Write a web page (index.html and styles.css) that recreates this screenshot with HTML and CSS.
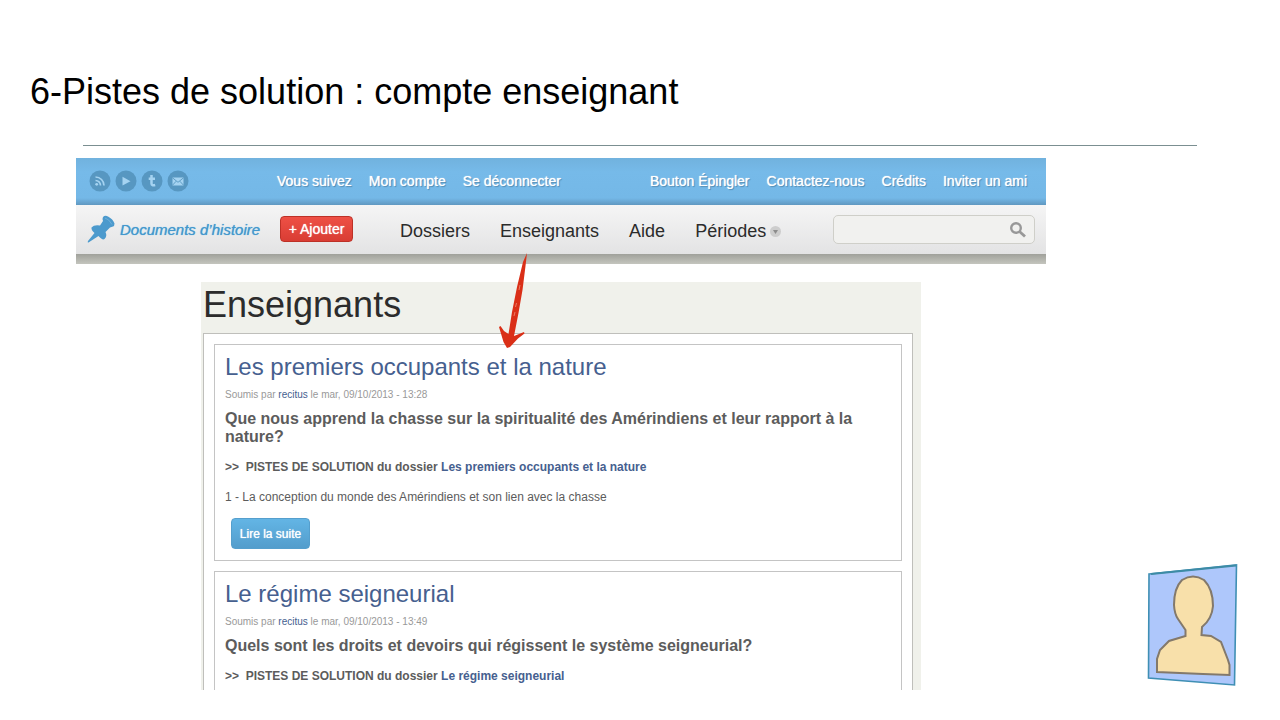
FILE: index.html
```
<!DOCTYPE html>
<html lang="fr">
    <head>
        <meta charset="utf-8">
        <title>Pistes de solution</title>
        <link rel="stylesheet" href="styles.css">
    </head>
    <body>
        <div class="slide">
            <h1 class="slideTitle">6-Pistes de solution : compte enseignant</h1>
            <hr class="slideRule">
            <div class="siteHeader">
                <div class="topBar">
                    <div class="social">
                        <a href="#" aria-label="RSS"><svg width="22" height="22" viewBox="0 0 22 22"><circle cx="11" cy="11" r="10.5" fill="#5797c1"/><g fill="none" stroke="#a5d3f1" stroke-width="1.7"><path d="M6.5 10.500a5 5 0 0 1 5 5M6.500 7a8.500 8.500 0 0 1 8.500 8.500"/></g><circle cx="7.700" cy="14.300" r="1.400" fill="#a5d3f1"/></svg></a>
                        <a href="#" aria-label="Vidéos"><svg width="22" height="22" viewBox="0 0 22 22"><circle cx="11" cy="11" r="10.5" fill="#5797c1"/><path d="M7.500 6.800l8 4.400-8 4.400z" fill="#a5d3f1"/></svg></a>
                        <a href="#" aria-label="Tumblr"><svg width="22" height="22" viewBox="0 0 22 22"><circle cx="11" cy="11" r="10.5" fill="#5797c1"/><path d="M10.500 5v8.500q0 2.500 3.700 1.500M7.700 8.800h6.300" fill="none" stroke="#a5d3f1" stroke-width="2.500"/></svg></a>
                        <a href="#" aria-label="Courriel"><svg width="22" height="22" viewBox="0 0 22 22"><circle cx="11" cy="11" r="10.5" fill="#5797c1"/><path d="M5.500 7.500h11v8h-11z" fill="#a5d3f1"/><path d="M5.500 7.800l5.500 4.500 5.500-4.500M5.500 15.200l3.700-4M16.500 15.200l-3.700-4" fill="none" stroke="#5797c1" stroke-width=".9"/></svg></a>
                    </div>
                    <div class="topLinks">
                        <a href="#">Vous suivez</a>
                        <a href="#">Mon compte</a>
                        <a href="#">Se déconnecter</a>
                    </div>
                    <div class="topLinks topRight">
                        <a href="#">Bouton Épingler</a>
                        <a href="#">Contactez-nous</a>
                        <a href="#">Crédits</a>
                        <a href="#">Inviter un ami</a>
                    </div>
                </div>
                <div class="navBar">
                    <a href="#" class="logo">
                        <svg width="30" height="30" viewBox="0 0 30 30"><path d="M17 2Q19 0 22 1.500Q27 4 28.500 8.500Q28.500 11 27 11.500L24 12.500L19.500 17Q21.500 21 18.500 24Q16.500 25.500 12.500 21L2.500 27.500Q1 27.500 2 26L8.500 18Q5 15 5.500 12.500Q8 9.500 14 10.500L17 6Q16 4 17 2Z" fill="#4c9acd"/><path d="M19 3Q23 4 26 9.500" fill="none" stroke="#76b4dc" stroke-width=".8"/></svg>
                        <span>Documents d’histoire</span>
                    </a>
                    <button type="button" class="addButton">+ Ajouter</button>
                    <div class="mainLinks">
                        <a href="#">Dossiers</a>
                        <a href="#">Enseignants</a>
                        <a href="#">Aide</a>
                        <a href="#" class="hasMenu">Périodes<svg width="11" height="11" viewBox="0 0 11 11"><circle cx="5.500" cy="5.500" r="5.500" fill="#cdcdcd"/><path d="M3 4h5L5.500 8z" fill="#8c8c8c"/></svg></a>
                    </div>
                    <form class="search">
                        <input type="text" aria-label="Rechercher">
                        <button type="button" aria-label="Lancer la recherche"><svg width="18" height="18" viewBox="0 0 18 18"><circle cx="7" cy="7" r="4.800" fill="none" stroke="#989898" stroke-width="2.400"/><path d="M10.500 10.500l5.500 5" stroke="#989898" stroke-width="2.800"/></svg></button>
                    </form>
                </div>
                <div class="headerShadow"></div>
            </div>
            <div class="page">
                <h2 class="pageTitle">Enseignants</h2>
                <div class="panel">
                    <div class="article">
                        <h3><a href="#">Les premiers occupants et la nature</a></h3>
                        <p class="submitted">Soumis par <a href="#">recitus</a> le mar, 09/10/2013 - 13:28</p>
                        <h4>Que nous apprend la chasse sur la spiritualité des Amérindiens et leur rapport à la nature?</h4>
                        <p class="solution">&gt;&gt;&nbsp; PISTES DE SOLUTION du dossier <a href="#">Les premiers occupants et la nature</a></p>
                        <p class="excerpt">1 - La conception du monde des Amérindiens et son lien avec la chasse</p>
                        <button type="button" class="readMore">Lire la suite</button>
                    </div>
                    <div class="article">
                        <h3><a href="#">Le régime seigneurial</a></h3>
                        <p class="submitted">Soumis par <a href="#">recitus</a> le mar, 09/10/2013 - 13:49</p>
                        <h4>Quels sont les droits et devoirs qui régissent le système seigneurial?</h4>
                        <p class="solution">&gt;&gt;&nbsp; PISTES DE SOLUTION du dossier <a href="#">Le régime seigneurial</a></p>
                    </div>
                </div>
            </div>
            <svg class="arrow" width="30" height="96" viewBox="0 0 30 96"><path d="M29 1L27.500 14L24.500 38L20.500 61L16 84L26 80L26.500 81.500L20 86.500L12 95L9 96L5.500 90L1 75L2.500 74L6 79L10.500 82L14 60L19 35L25 10Z" fill="#da2f17"/><path d="M22 33l-1 5M17.500 55l1-4M16 64l1-4" fill="none" stroke="#ef9079" stroke-width=".8"/></svg>
            <svg class="avatar" width="92" height="124" viewBox="0 0 92 124"><path d="M3 11L90.500 2L88.500 122L2.500 115Z" fill="#aec7fb" stroke="#3f8fb4" stroke-width="1.600"/><path d="M5 11L45 7L90 2.500" fill="none" stroke="#3d8ba5" stroke-width="2.200"/><path d="M39.500 73V67L32 56Q28.500 51 28 42Q28 25 36 17Q47 10 58 17Q67 26 67 43Q66 56 56 64L55.500 72L65 73L75 79L82 97L83.500 102V112L57 111L11 109V96L14 87L23 78Z" fill="#f8e0aa" stroke="#83796b" stroke-width="2"/></svg>
        </div>
    </body>
</html>
```
FILE: styles.css
```
body {
    margin: 0;
    background: #fff;
    font-family: "Liberation Sans", Arial, sans-serif;
    font-size: 12px;
    color: #5c5c5c;
}
a {
    text-decoration: none;
    color: #46608f;
}
h1, h2, h3, h4, p {
    margin: 0;
    font-weight: normal;
}
button {
    font-family: inherit;
    cursor: pointer;
}
svg {
    display: block;
    flex-shrink: 0;
}
.slide {
    position: relative;
    display: flex;
    flex-direction: column;
    box-sizing: border-box;
    height: 100vh;
    padding: 72px 0 30px;
    overflow: hidden;
}
.slideTitle {
    padding-left: 30px;
    font-size: 36px;
    line-height: 40px;
    color: #000;
}
.slideRule {
    width: 87%;
    margin: 33px auto 12px;
    border: 0;
    border-top: 1px solid #7b8f91;
}
.siteHeader {
    margin: 0 234px 0 76px;
}
.topBar {
    display: flex;
    align-items: center;
    height: 47px;
    padding: 0 19px 1px 13px;
    box-sizing: border-box;
    background: linear-gradient(#71b2de, #76bae9 30%, #74b8e7 85%, #6098c1);
}
.social {
    display: flex;
    gap: 4px;
}
.topLinks {
    display: flex;
    gap: 17px;
    margin-left: 88px;
    font-size: 14px;
    white-space: nowrap;
}
.topLinks a {
    color: #fff;
    text-shadow: 0 0 1px #fff, 1px 1px 1px #4682ab;
}
.topRight {
    margin-left: auto;
}
.navBar {
    display: flex;
    align-items: center;
    height: 49px;
    padding: 0 11px 0 10px;
    box-sizing: border-box;
    background: linear-gradient(#f5f5f5, #e3e3e4);
}
.logo {
    display: flex;
    align-items: center;
    gap: 4px;
    width: 194px;
    color: #4498cd;
    font-size: 15px;
    font-style: italic;
    white-space: nowrap;
    text-shadow: 0 0 1px #4498cd, 0 0 2px #fff;
}
.addButton {
    height: 26px;
    width: 73px;
    margin-bottom: 2px;
    padding: 0;
    border: 1px solid #bd3127;
    border-radius: 4px;
    background: linear-gradient(#ee5045, #d93d34);
    color: #fff;
    font-size: 14px;
    text-shadow: 0 0 1px #fff;
}
.mainLinks {
    display: flex;
    gap: 30px;
    margin-left: 47px;
    padding-top: 3px;
    font-size: 18px;
}
.mainLinks a {
    color: #2b2b2b;
}
.hasMenu {
    display: flex;
    align-items: center;
    gap: 4px;
}
.search {
    display: flex;
    align-items: center;
    width: 202px;
    height: 29px;
    margin-left: auto;
    box-sizing: border-box;
    border: 1px solid #cfcfc9;
    border-radius: 5px;
    background: #f1f1ef;
}
.search input {
    flex: 1;
    min-width: 0;
    border: 0;
    background: none;
}
.search button {
    padding: 0 7px;
    border: 0;
    background: none;
}
.headerShadow {
    height: 10px;
    background: linear-gradient(#a0a19b, #c4c5be);
}
.page {
    flex: 1;
    min-height: 0;
    margin: 18px 359px 0 201px;
    padding: 0 8px 0 2px;
    overflow: hidden;
    background: #f0f1eb;
}
.pageTitle {
    padding: 2px 0 7px;
    font-size: 36px;
    line-height: 42px;
    color: #2c2c2c;
}
.panel {
    padding: 10px;
    border: 1px solid #bfbfbb;
    background: #fff;
}
.article {
    margin-bottom: 10px;
    padding: 7px 10px 11px;
    border: 1px solid #c4c4c4;
}
.article h3 {
    font-size: 24px;
    line-height: 30px;
}
.submitted {
    margin-top: 7px;
    font-size: 10px;
    line-height: 12px;
    color: #999;
}
.article h4 {
    margin-top: 9px;
    font-size: 16px;
    line-height: 18px;
    font-weight: bold;
}
.solution {
    margin-top: 12px;
    line-height: 18px;
    font-weight: bold;
}
.excerpt {
    margin-top: 12px;
    line-height: 18px;
}
.readMore {
    display: block;
    width: 79px;
    height: 31px;
    margin: 12px 0 0 6px;
    padding: 0;
    border: 1px solid #559fcd;
    border-radius: 4px;
    background: linear-gradient(#63b5e5, #539dcc);
    color: #fff;
    font-size: 12px;
    text-shadow: 0 0 1px #fff;
}
.arrow {
    position: absolute;
    left: 498px;
    top: 252px;
}
.avatar {
    position: absolute;
    right: 42px;
    bottom: 33px;
}
```
